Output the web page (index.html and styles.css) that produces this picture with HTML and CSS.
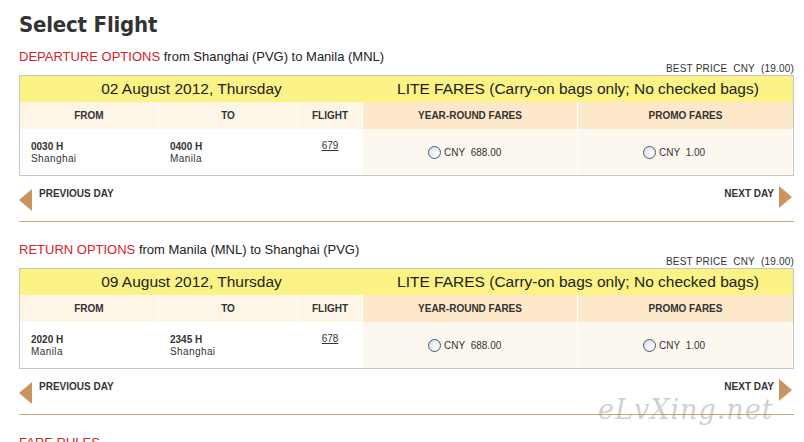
FILE: index.html
```html
<!DOCTYPE html>
<html>
<head>
  <meta charset="utf-8">
  <link rel="stylesheet" href="styles.css">
</head>
<body>
  <h1 class="page-title">Select Flight</h1>

  <div class="leg">
    <div class="leg-title"><span class="leg-label">DEPARTURE OPTIONS</span> from Shanghai (PVG) to Manila (MNL)</div>
    <div class="best-price">BEST PRICE&nbsp; CNY&nbsp; (19.00)</div>
    <div class="fare-table">
      <div class="date-cell">02 August 2012, Thursday</div>
      <div class="lite-cell">LITE FARES (Carry-on bags only; No checked bags)</div>
      <div class="th">FROM</div>
      <div class="th">TO</div>
      <div class="th">FLIGHT</div>
      <div class="th fare">YEAR-ROUND FARES</div>
      <div class="th fare last">PROMO FARES</div>
      <div class="td place"><b>0030 H</b><span>Shanghai</span></div>
      <div class="td place"><b>0400 H</b><span>Manila</span></div>
      <div class="td flight"><a href="#">679</a></div>
      <div class="td fare"><i class="radio"></i>CNY&nbsp; 688.00</div>
      <div class="td fare last"><i class="radio"></i>CNY&nbsp; 1.00</div>
    </div>
    <div class="day-nav">
      <a class="day-link prev" href="#"><i class="arrow-left"></i>PREVIOUS DAY</a>
      <a class="day-link next" href="#">NEXT DAY<i class="arrow-right"></i></a>
    </div>
  </div>

  <div class="leg">
    <div class="leg-title"><span class="leg-label">RETURN OPTIONS</span> from Manila (MNL) to Shanghai (PVG)</div>
    <div class="best-price">BEST PRICE&nbsp; CNY&nbsp; (19.00)</div>
    <div class="fare-table">
      <div class="date-cell">09 August 2012, Thursday</div>
      <div class="lite-cell">LITE FARES (Carry-on bags only; No checked bags)</div>
      <div class="th">FROM</div>
      <div class="th">TO</div>
      <div class="th">FLIGHT</div>
      <div class="th fare">YEAR-ROUND FARES</div>
      <div class="th fare last">PROMO FARES</div>
      <div class="td place"><b>2020 H</b><span>Manila</span></div>
      <div class="td place"><b>2345 H</b><span>Shanghai</span></div>
      <div class="td flight"><a href="#">678</a></div>
      <div class="td fare"><i class="radio"></i>CNY&nbsp; 688.00</div>
      <div class="td fare last"><i class="radio"></i>CNY&nbsp; 1.00</div>
    </div>
    <div class="day-nav">
      <a class="day-link prev" href="#"><i class="arrow-left"></i>PREVIOUS DAY</a>
      <a class="day-link next" href="#">NEXT DAY<i class="arrow-right"></i></a>
    </div>
  </div>

  <div class="leg">
    <div class="leg-title"><span class="leg-label">FARE RULES</span></div>
  </div>

  <div class="watermark">eLvXing.net</div>
</body>
</html>
```

FILE: styles.css
```css
body {
  margin: 0;
  padding: 0 10px 0 19px;
  font-family: "Liberation Sans", Arial, sans-serif;
  color: #222;
  background: #fff;
  position: relative;
  height: 442px;
  overflow: hidden;
}

.page-title {
  margin: 0;
  padding-top: 11px;
  height: 38px;
  font-family: "DejaVu Sans Condensed", "DejaVu Sans", sans-serif;
  font-size: 22px;
  line-height: 28px;
  font-weight: bold;
  color: #333;
  letter-spacing: -0.2px;
}

.leg {
  margin-top: 20px;
}

.page-title + .leg {
  margin-top: 0;
}

.leg-title {
  font-size: 13px;
  line-height: 16px;
  color: #222;
}

.leg-label {
  color: #d7212b;
}

.best-price {
  text-align: right;
  font-size: 10px;
  line-height: 11px;
  color: #333;
  margin-top: -2px;
  margin-bottom: 1px;
  letter-spacing: 0.2px;
}

.fare-table {
  display: grid;
  grid-template-columns: 139px 139px 65px 215px 1fr;
  border: 1px solid #c6c6c6;
}

.date-cell,
.lite-cell {
  background-color: #fbf385;
  height: 26px;
  line-height: 26px;
  font-size: 15.5px;
  color: #222;
  text-align: center;
}

.date-cell {
  grid-column: 1 / 4;
}

.lite-cell {
  grid-column: 4 / 6;
}

.th {
  height: 27px;
  line-height: 27px;
  background-color: #fdf6e7;
  border-right: 1px solid #fff;
  font-size: 10px;
  font-weight: bold;
  color: #333;
  text-align: center;
}

.th.fare {
  background-color: #fde8c9;
}

.last {
  border-right: none;
}

.td {
  height: 46px;
  border-right: 1px solid #fff;
  font-size: 10px;
  color: #333;
  background-color: #fff;
}

.td.place {
  padding: 12px 0 0 11px;
  box-sizing: border-box;
  line-height: 12px;
}

.td.place b,
.td.place span {
  display: block;
}

.td.place span {
  letter-spacing: 0.4px;
}

.td.flight {
  padding-top: 11px;
  box-sizing: border-box;
  text-align: center;
  line-height: 12px;
}

.td.flight a {
  color: #333;
}

.td.fare {
  background-color: #fdf8ef;
  display: flex;
  align-items: center;
  padding-left: 65px;
}

.radio {
  display: inline-block;
  width: 11px;
  height: 11px;
  border: 1px solid #445a7c;
  border-radius: 50%;
  background: radial-gradient(circle at 65% 65%, #ffffff 0%, #e6e9ee 60%, #c9ced8 100%);
  margin-right: 3px;
}

.day-nav {
  display: flex;
  justify-content: space-between;
  height: 45px;
  border-bottom: 1px solid #c6a57a;
}

.day-link {
  display: flex;
  align-items: flex-start;
  font-size: 10px;
  font-weight: bold;
  color: #333;
  text-decoration: none;
  padding-top: 12px;
  line-height: 12px;
}

.arrow-left {
  width: 0;
  height: 0;
  border-top: 11px solid transparent;
  border-bottom: 11px solid transparent;
  border-right: 13px solid #c8955f;
  margin: 1px 7px 0 0;
}

.arrow-right {
  width: 0;
  height: 0;
  border-top: 11px solid transparent;
  border-bottom: 11px solid transparent;
  border-left: 13px solid #c8955f;
  margin: -2px 2px 0 5px;
}

.watermark {
  position: absolute;
  left: 598px;
  top: 394px;
  font-family: "DejaVu Serif", serif;
  font-style: italic;
  font-size: 27px;
  letter-spacing: 1px;
  color: rgba(160, 160, 160, 0.5);
}
```
